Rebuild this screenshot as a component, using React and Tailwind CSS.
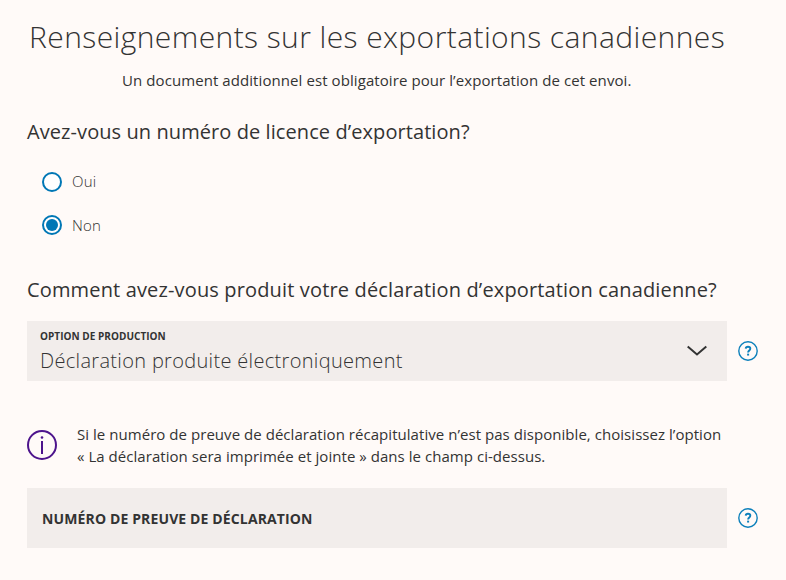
import { useState } from "react";

function HelpIcon() {
  return (
    <svg width="20" height="20" viewBox="0 0 20 20" fill="none" stroke="#0d80bb">
      <circle cx="10" cy="10" r="9.2" strokeWidth="1.4" />
      <path d="M7.7 7.6C7.8 6.4 8.7 5.8 10 5.8s2.3.7 2.3 1.9c0 1.7-2.2 1.8-2.2 3.7" strokeWidth="1.9" />
      <path d="M9.1 13.6h2" strokeWidth="1.9" />
    </svg>
  );
}

function InfoIcon() {
  return (
    <svg width="30" height="30" viewBox="0 0 30 30" fill="none" stroke="#4d148c">
      <circle cx="15" cy="15" r="14" strokeWidth="2" />
      <path d="M15 11v13" strokeWidth="2" />
      <circle cx="15" cy="7.5" r="1.3" fill="#4d148c" stroke="none" />
    </svg>
  );
}

function RadioOption({ label, checked, onChange }) {
  return (
    <label className="flex h-5 cursor-pointer items-center">
      <input type="radio" name="licence" className="sr-only" checked={checked} onChange={onChange} />
      <span className="flex size-5 items-center justify-center rounded-full border-2 border-[#0077b5] bg-white">
        {checked && <span className="size-3 rounded-full bg-[#0077b5]"></span>}
      </span>
      <span className={`ml-2.5 text-[15px] leading-5 font-light tracking-[0.2px] ${checked ? "" : "pb-0.5"}`}>
        {label}
      </span>
    </label>
  );
}

function App() {
  const [licence, setLicence] = useState("Non");

  return (
    <div className="h-[580px] w-[786px] overflow-hidden bg-[#fffaf8] pl-[27px] font-['Open_Sans','Noto_Sans',sans-serif] whitespace-nowrap text-[#333]">
      <div className="w-[700px]">
        <h1 className="pt-[17px] pl-0.5 text-[30px] leading-10 font-light tracking-[0.41px]">
          Renseignements sur les exportations canadiennes
        </h1>
        <p className="mt-3 pl-[95px] text-[15px] leading-[22px] tracking-[0.08px]">
          Un document additionnel est obligatoire pour l’exportation de cet envoi.
        </p>

        <h2 className="mt-[27px] text-[20px] leading-7 tracking-[0.08px]">
          Avez-vous un numéro de licence d’exportation?
        </h2>
        <div className="mt-[26px] flex flex-col gap-[23px] pl-[15px]">
          <RadioOption label="Oui" checked={licence === "Oui"} onChange={() => setLicence("Oui")} />
          <RadioOption label="Non" checked={licence === "Non"} onChange={() => setLicence("Non")} />
        </div>

        <h2 className="mt-[41px] text-[20px] leading-7 tracking-[0.15px]">
          Comment avez-vous produit votre déclaration d’exportation canadienne?
        </h2>
      </div>

      <div className="mt-[17px] flex items-center gap-[11px]">
        <button type="button" className="flex h-[60px] w-[700px] items-center justify-between bg-[#f2edeb] pr-5 pl-[13px] text-left">
          <span className="flex flex-col pt-px">
            <span className="text-[10px] leading-4 font-bold tracking-[0.04px]">OPTION DE PRODUCTION</span>
            <span className="mt-[3px] text-[20px] leading-7 font-light tracking-[0.32px]">Déclaration produite électroniquement</span>
          </span>
          <svg width="20" height="12" viewBox="0 0 20 12" fill="none" stroke="#333" strokeWidth="2">
            <path d="M.7 1.5 10 9.5l9.3-8" />
          </svg>
        </button>
        <HelpIcon />
      </div>

      <div className="mt-[42px] flex w-[700px] items-center">
        <InfoIcon />
        <p className="ml-5 text-[15px] leading-[22px] tracking-[0.045px]">
          Si le numéro de preuve de déclaration récapitulative n’est pas disponible, choisissez l’option
          <br />
          « La déclaration sera imprimée et jointe » dans le champ ci-dessus.
        </p>
      </div>

      <div className="mt-[21px] flex items-center gap-[11px]">
        <div className="flex h-[60px] w-[700px] items-center bg-[#f2edeb] pl-[15px] text-[14px] font-bold tracking-[0.13px]">
          NUMÉRO DE PREUVE DE DÉCLARATION
        </div>
        <HelpIcon />
      </div>
    </div>
  );
}

export default App;
